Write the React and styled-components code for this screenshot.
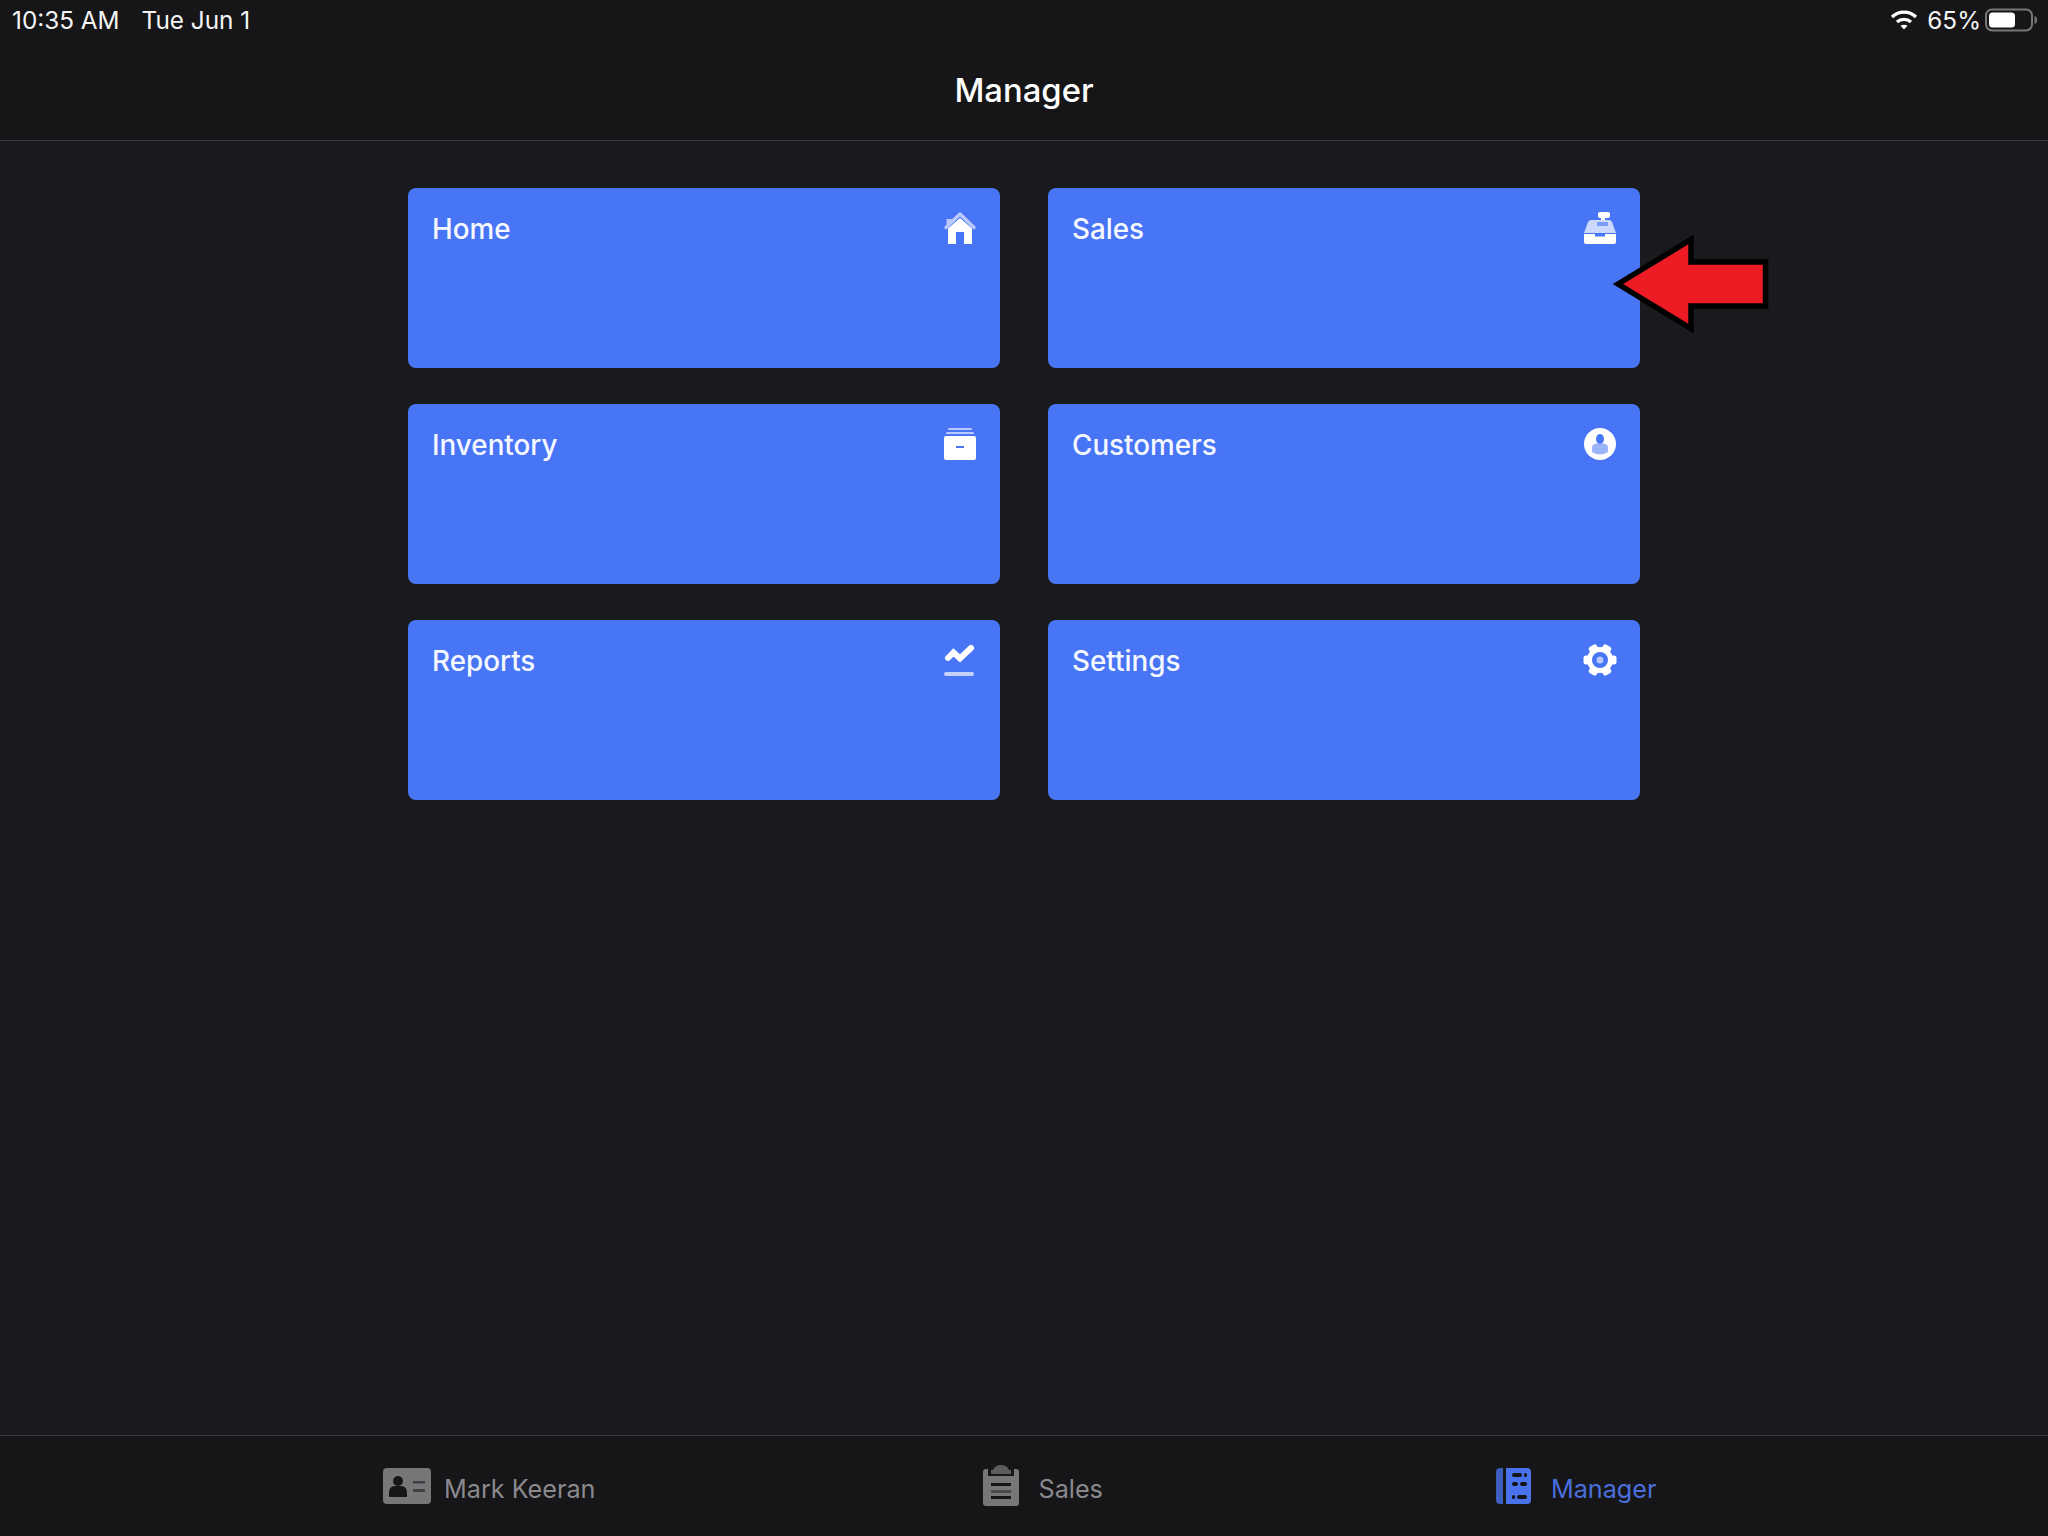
import React from "react";
import styled, { createGlobalStyle } from "styled-components";

const Global = createGlobalStyle`
  html, body { margin: 0; padding: 0; background: #191a1e; }
  * { box-sizing: border-box; }
`;

const Page = styled.div`
  position: relative;
  width: 2048px;
  height: 1536px;
  display: flex;
  flex-direction: column;
  overflow: hidden;
  background: #191a1e;
  font-family: Inter, "Liberation Sans", sans-serif;
  color: #fff;
`;

const Header = styled.header`
  height: 141px;
  flex: none;
  background: #161618;
  border-bottom: 1px solid #3a3a3e;
  display: flex;
  flex-direction: column;
`;

const StatusBar = styled.div`
  height: 40px;
  padding: 0 10px 0 12px;
  display: flex;
  align-items: center;
  justify-content: space-between;
  font-size: 24.3px;
  line-height: 40px;
  color: #f4f4f5;
`;

const StatusGroup = styled.div`
  display: flex;
  align-items: center;
  gap: ${(p) => p.$gap}px;
`;

const Title = styled.h1`
  margin: 0;
  padding-top: 30px;
  text-align: center;
  font-size: 32.8px;
  line-height: 40px;
  font-weight: 500;
`;

const Main = styled.main`
  flex: 1;
  padding-top: 47px;
  display: flex;
  justify-content: center;
`;

const Grid = styled.div`
  display: grid;
  grid-template-columns: repeat(2, 592px);
  grid-auto-rows: 180px;
  column-gap: 48px;
  row-gap: 36px;
  align-content: start;
`;

const Card = styled.div`
  border-radius: 8px;
  background: #4775f5;
  padding: 22px 23px 22px 24px;
  display: flex;
  justify-content: space-between;
  align-items: flex-start;
`;

const CardTitle = styled.span`
  padding-top: 1px;
  font-size: 27.8px;
  line-height: 36px;
  font-weight: 500;
  color: #f6f8ff;
`;

const Footer = styled.footer`
  height: 101px;
  flex: none;
  background: #161618;
  border-top: 1px solid #3a3a3e;
  padding-left: 383px;
  display: flex;
  align-items: center;
`;

const Tab = styled.div`
  margin-left: ${(p) => p.$offset || 0}px;
  display: flex;
  align-items: center;
  gap: ${(p) => p.$gap}px;
  font-size: 25.2px;
  line-height: 34px;
  color: ${(p) => (p.$active ? "#4a6fdc" : "#8a8a8e")};
`;

const TabLabel = styled.span`
  padding-top: 5px;
`;

const Arrow = styled.svg`
  position: absolute;
  left: 1610px;
  top: 232px;
`;

const Wifi = () => (
  <svg width="33" height="22" viewBox="0 0 33 22" fill="none" stroke="#fff" strokeLinecap="butt">
    <path d="M2 8 C9 1.500 19 1.500 26 8" strokeWidth="3.400" />
    <path d="M7 13 C11 9.500 17 9.500 21 13" strokeWidth="3.400" />
    <path d="M14 20.500 L10.500 16.800 C12.500 15.400 15.500 15.400 17.500 16.800 Z" fill="#fff" stroke="none" />
  </svg>
);

const Battery = () => (
  <svg width="53" height="24" viewBox="0 0 53 24">
    <rect x="1" y="1.500" width="46" height="21" rx="6" fill="none" stroke="#77777a" strokeWidth="2" />
    <rect x="4" y="4.500" width="26" height="15" rx="3.500" fill="#fff" />
    <path d="M49.500 8 C53 9 53 15 49.500 16 Z" fill="#77777a" />
  </svg>
);

const HomeIcon = () => (
  <svg width="34" height="36" viewBox="0 0 34 36">
    <path d="M3.500 9 H10 L3.500 15 Z" fill="#b9c9fb" />
    <path d="M3 17.500 L17 4 L31 17.500" fill="none" stroke="#b9c9fb" strokeWidth="3.400" strokeLinecap="round" strokeLinejoin="round" />
    <path d="M5 18.500 L17 8 L29 18.500 V34 H21 V22 H13 V34 H5 Z" fill="#fff" />
  </svg>
);

const RegisterIcon = () => (
  <svg width="34" height="36" viewBox="0 0 34 36">
    <rect x="15" y="2" width="12" height="6" rx="2" fill="#fff" />
    <rect x="18" y="8" width="4" height="2" fill="#fff" />
    <path d="M8 10 H26 Q28 10 29 12 L33 23 H1 L5 12 Q6 10 8 10 Z" fill="#ccd8fc" />
    <rect x="14" y="12" width="11" height="4" fill="#7c9bf7" />
    <path d="M1 24 H12 V26.500 H22 V24 H33 V32 Q33 34 31 34 H3 Q1 34 1 32 Z" fill="#fff" />
  </svg>
);

const ArchiveIcon = () => (
  <svg width="34" height="36" viewBox="0 0 34 36">
    <rect x="5" y="2" width="24" height="2" rx="1" fill="#b9c9fb" />
    <rect x="3" y="6" width="28" height="2" rx="1" fill="#b9c9fb" />
    <path d="M3 10 H31 Q33 10 33 12 V32 Q33 34 31 34 H3 Q1 34 1 32 V12 Q1 10 3 10 Z" fill="#fff" />
    <rect x="13" y="20" width="8" height="2" fill="#4775f5" />
  </svg>
);

const UserIcon = () => (
  <svg width="34" height="36" viewBox="0 0 34 36">
    <circle cx="17" cy="18" r="16" fill="#fff" />
    <path d="M9 26 V22 Q9 17.500 14 17.500 H20 Q25 17.500 25 22 V26 Q21 28.500 17 28.500 Q13 28.500 9 26 Z" fill="#9db4f9" />
    <ellipse cx="17" cy="13" rx="4" ry="5" fill="#4775f5" />
  </svg>
);

const ChartIcon = () => (
  <svg width="34" height="36" viewBox="0 0 34 36">
    <path d="M5 16 L10.500 10.500 L17 16.500 L28 6" fill="none" stroke="#fff" strokeWidth="6" strokeLinecap="round" strokeLinejoin="miter" />
    <rect x="1" y="30" width="30" height="4" rx="2" fill="#c5d2fb" />
  </svg>
);

const GearIcon = () => {
  const teeth = Array.from({ length: 6 }, (_, i) => i * 60 + 30);
  return (
    <svg width="34" height="36" viewBox="0 0 34 36">
      <g transform="translate(17 18)">
        {teeth.map((a) => (
          <rect key={a} x="-4.500" y="-16.500" width="9" height="8" rx="2.500" fill="#fff" transform={`rotate(${a})`} />
        ))}
        <circle r="13" fill="#fff" />
        <circle r="8" fill="#4775f5" />
        <circle r="3.500" fill="#b9c9fb" />
      </g>
    </svg>
  );
};

const ContactIcon = () => (
  <svg width="48" height="36" viewBox="0 0 48 36">
    <rect x="0" y="0" width="48" height="36" rx="4" fill="#77777a" />
    <circle cx="15" cy="13" r="5" fill="#161618" />
    <path d="M6 28 V25 Q6 18 12 18 H18 Q24 18 24 25 V28 Q24 29 23 29 H7 Q6 29 6 28 Z" fill="#161618" />
    <rect x="30" y="13" width="12" height="2.500" fill="#3f3f42" />
    <rect x="30" y="21" width="12" height="3" fill="#3f3f42" />
  </svg>
);

const ClipboardIcon = () => (
  <svg width="36" height="42" viewBox="0 0 36 42">
    <path d="M10 5 Q12 0 18 0 Q24 0 26 5 H28 V9 H8 V5 Z" fill="#5d5d60" />
    <path d="M3 4 H5 V11 H31 V4 H33 Q36 4 36 7 V38 Q36 41 33 41 H3 Q0 41 0 38 V7 Q0 4 3 4 Z" fill="#77777a" />
    <rect x="8" y="18" width="20" height="3" fill="#161618" />
    <rect x="8" y="25" width="20" height="3" fill="#4a4a4d" />
    <rect x="8" y="31" width="20" height="3" fill="#161618" />
  </svg>
);

const BookIcon = () => (
  <svg width="35" height="36" viewBox="0 0 35 36">
    <path d="M7 0 V36 H4 Q0 36 0 32 V4 Q0 0 4 0 Z" fill="#3d5fbf" />
    <path d="M10 0 H31 Q35 0 35 4 V32 Q35 36 31 36 H10 Z" fill="#4a72ec" />
    <rect x="16" y="5" width="10" height="4" rx="2" fill="#161618" />
    <rect x="28" y="5" width="3" height="4" rx="1.500" fill="#161618" />
    <rect x="16" y="14" width="6" height="4" rx="2" fill="#161618" />
    <rect x="24" y="14" width="7" height="4" rx="2" fill="#161618" />
    <rect x="16" y="27" width="3" height="4" rx="1.500" fill="#161618" />
    <rect x="21" y="27" width="10" height="4" rx="2" fill="#161618" />
  </svg>
);

const cards = [
  ["Home", HomeIcon],
  ["Sales", RegisterIcon],
  ["Inventory", ArchiveIcon],
  ["Customers", UserIcon],
  ["Reports", ChartIcon],
  ["Settings", GearIcon],
];

export default function App() {
  return (
    <Page>
      <Global />
      <Header>
        <StatusBar>
          <StatusGroup $gap={22}>
            <span>10:35 AM</span>
            <span>Tue Jun 1</span>
          </StatusGroup>
          <StatusGroup $gap={4}>
            <Wifi />
            <span>65%</span>
            <Battery />
          </StatusGroup>
        </StatusBar>
        <Title>Manager</Title>
      </Header>
      <Main>
        <Grid>
          {cards.map(([name, Icon]) => (
            <Card key={name}>
              <CardTitle>{name}</CardTitle>
              <Icon />
            </Card>
          ))}
        </Grid>
      </Main>
      <Footer>
        <Tab $gap={13}>
          <ContactIcon />
          <TabLabel>Mark Keeran</TabLabel>
        </Tab>
        <Tab $offset={388} $gap={19}>
          <ClipboardIcon />
          <TabLabel>Sales</TabLabel>
        </Tab>
        <Tab $active $offset={393} $gap={20}>
          <BookIcon />
          <TabLabel>Manager</TabLabel>
        </Tab>
      </Footer>
      <Arrow width="164" height="104" viewBox="0 0 164 104">
        <path d="M8 52 L81 7.500 V30 H155.500 V74 H81 V96.500 Z" fill="#ed1c24" stroke="#000" strokeWidth="5.500" strokeLinejoin="miter" />
      </Arrow>
    </Page>
  );
}
